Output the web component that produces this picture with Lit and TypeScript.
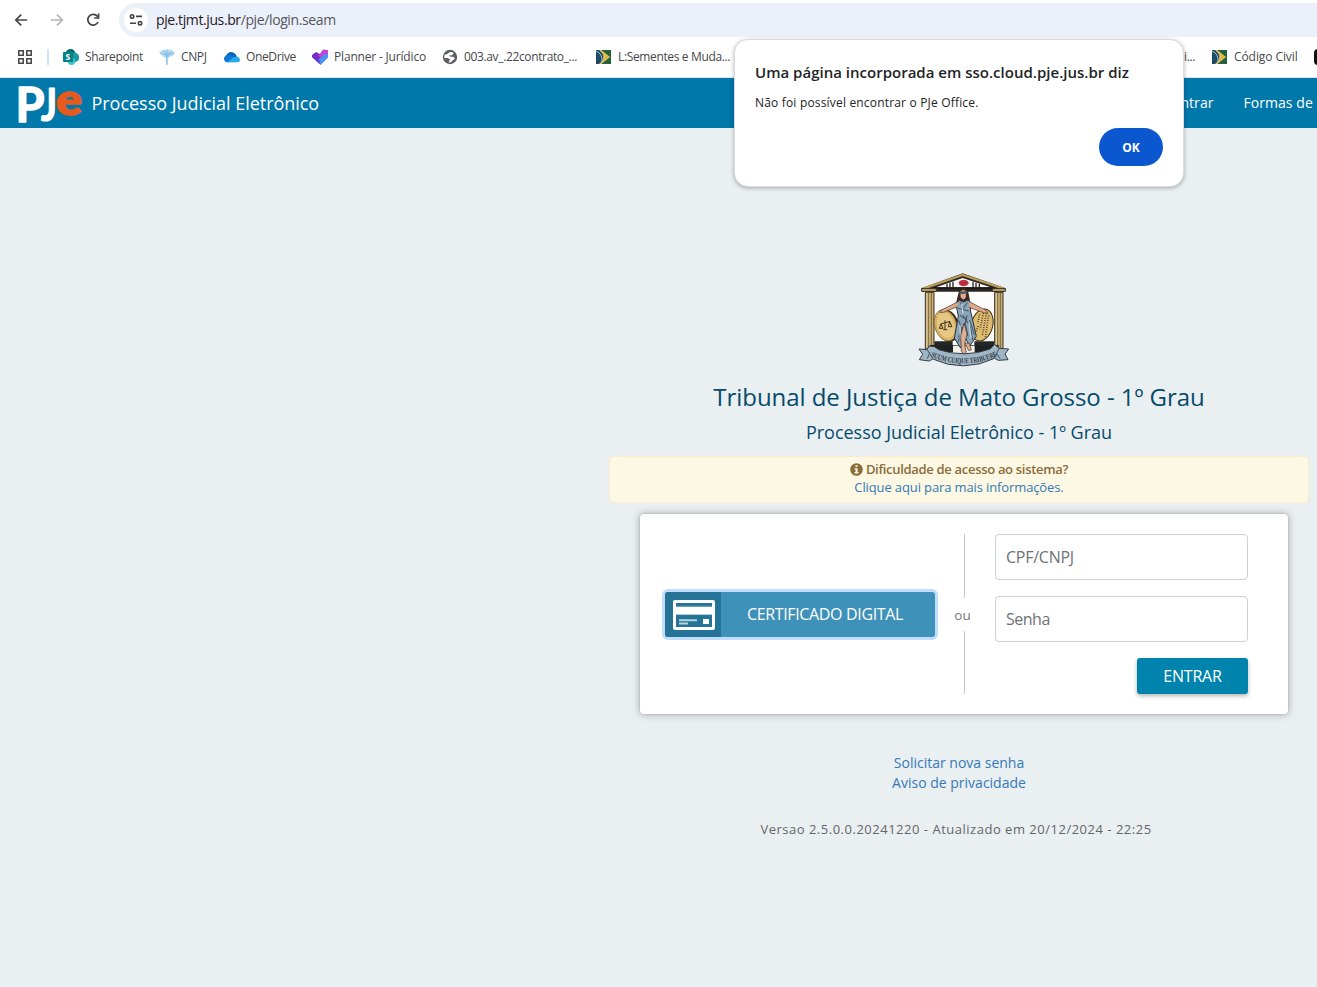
import { LitElement, html, svg, css } from "lit";
import { customElement, property } from "lit/decorators.js";

const flag = svg`
  <rect x="0" y="1" width="15" height="14" fill="#23613c"/>
  <path d="M0 1H5L14 8L5 15H0Z" fill="#f2d58a"/>
  <path d="M5 1L13.5 8L5 15L9 8Z" fill="#e2b53b"/>
  <path d="M0 1H3Q12 8 3 15H0Z" fill="#1c4a63"/>
  <path d="M0 2Q7 5 6 13" fill="none" stroke="#a9c5cf" stroke-width="1"/>`;

const icons: Record<string, unknown> = {
  sharepoint: svg`
    <circle cx="7.5" cy="5" r="5" fill="#036c70"/>
    <circle cx="11.5" cy="8.5" r="4.7" fill="#1a9ba1"/>
    <circle cx="8.5" cy="12.3" r="3.6" fill="#37c6d0"/>
    <rect x="0" y="3" width="10" height="10" rx="1" fill="#038387"/>
    <text x="2.4" y="11" font-family="Open Sans, sans-serif" font-weight="700" font-size="8.5" letter-spacing="0" fill="#fff">S</text>`,
  cnpj: svg`
    <path d="M0 3L4 1L8 0L13 1L16 4L14 7L10 8L9 11L9 16L7 16L7 9L3 7Z" fill="#b9dcf1"/>
    <path d="M1 4L7 6L8 15M4 1L8 8L13 2M8 1L7 6L15 4" fill="none" stroke="#7fb6de" stroke-width=".8"/>
    <path d="M6 4L10 3L11 6L8 9Z" fill="#8dc4e9"/>`,
  onedrive: svg`
    <path d="M3 13A4 4 0 0 1 2 6.6Q5 1.6 9.4 3.6Q12 5 13 8L9 13Z" fill="#0364b8"/>
    <path d="M3 13.3A3.4 3.4 0 0 1 2 6.8Q5 5 8 7L13 10V13Z" fill="#0f78d4"/>
    <path d="M3 13.3L10 8Q13 6.5 15.3 8.8Q17 12.6 14 13.3Z" fill="#28a8ea"/>`,
  planner: svg`
    <path d="M0 6L4 3L8 5L11 .8L16 1V8L8.5 15.8L0 8Z" fill="#7a2fc4"/>
    <path d="M5 5L8 6L11 .8L16 1V5L9 9Z" fill="#c644d8"/>
    <path d="M6 11L12 5.5L16 5V8.5L8.8 15.8L6 13Z" fill="#4a93f2"/>
    <path d="M0 6L4 8L8 12L7 14.4L0 8Z" fill="#6a35cf"/>`,
  globe: svg`
    <circle cx="8" cy="8" r="7.2" fill="#5b5e62"/>
    <path d="M2.6 5.6Q5 5.5 6.5 4L9 2.8L11.8 4L10.2 6.2L7 6.6L8 7.6L12 8L12.8 10L10.5 11.4L9 13.2L6.6 13.6L7.6 11L8.6 10.4L5.5 9L2.2 9Z" fill="#fff"/>`,
  flag,
  black: svg`<rect x="0" y="0" width="16" height="16" rx="4" fill="#111"/>`,
};

@customElement("bookmark-item")
class BookmarkItem extends LitElement {
  @property() icon = "";
  @property() label = "";
  static styles = css`
    :host { display: flex; align-items: center; gap: 6px; flex: none; height: 16px;
      font: 12px/16px "Open Sans", "Noto Sans", sans-serif; letter-spacing: -0.36px; color: #45474a; white-space: nowrap; }
    svg { width: 16px; height: 16px; flex: none; }
  `;
  render() {
    return html`${this.icon ? html`<svg viewBox="0 0 16 16">${icons[this.icon]}</svg>` : ""}<span>${this.label}</span>`;
  }
}

@customElement("court-emblem")
class CourtEmblem extends LitElement {
  static styles = css`:host { display: block; } svg { display: block; width: 110px; height: 110px; }`;
  render() {
    return html`<svg viewBox="0 0 330 330">
      <path d="M66 76H256V240H66Z" fill="#fbfcfb"/>
      <path d="M34 70L158 25L287 70L285 80H36Z" fill="#282522"/>
      <path d="M42 70L158 30L279 70" fill="none" stroke="#b99c5c" stroke-width="7"/>
      <path d="M78 67L158 39L242 67Z" fill="#fafafa"/>
      <g stroke="#282522" stroke-width="4"><path d="M111 56V67M120 53V67M129 50V67M189 50V67M198 53V67M208 56V67"/></g>
      <ellipse cx="161" cy="54" rx="15" ry="10" fill="#c93847"/>
      <path d="M151 52H171M151 57H171" stroke="#8b1e30" stroke-width="2"/>
      <path d="M74 69H248" stroke="#191715" stroke-width="5"/>
      <g fill="#c7b078" stroke="#3a3022" stroke-width="3">
        <path d="M46 82H72V252H46ZM254 82H279V252H254Z"/>
        <path d="M35 71H79V79H35ZM247 71H286V79H247Z"/>
      </g>
      <g stroke="#7d6538" stroke-width="3"><path d="M55 84V250M64 84V250M263 84V250M271 84V250"/></g>
      <g stroke="#eee0b4" stroke-width="2"><path d="M51 84V250M259 84V250"/></g>
      <path d="M73 229H128V242H73ZM193 229H252V242H193Z" fill="#252628"/>
      <path d="M60 240H266V262H60Z" fill="#1e2022"/>
      <path d="M129 242H194V264H129Z" fill="#f2f1ec"/>
      <ellipse cx="111" cy="182" rx="35" ry="50" transform="rotate(-17 110 181)" fill="#2a241b"/>
      <ellipse cx="107" cy="181" rx="33" ry="48" transform="rotate(-17 107 181)" fill="#dcb765" stroke="#756034" stroke-width="2"/>
      <ellipse cx="107" cy="181" rx="27" ry="41" transform="rotate(-17 107 181)" fill="#e7c883" stroke="#c19d55" stroke-width="3" stroke-dasharray="3 3"/>
      <path d="M105 166V193M92 177L120 169M93 177L88 190H99L93 177M119 170L115 185H126L119 170M100 194H112" fill="none" stroke="#3f321e" stroke-width="3"/>
      <ellipse cx="216" cy="180" rx="32" ry="49" transform="rotate(15 216 180)" fill="#dcb765" stroke="#3c301d" stroke-width="3"/>
      <ellipse cx="216" cy="180" rx="26" ry="43" transform="rotate(15 216 180)" fill="#dfbd73"/>
      <path d="M209 148L203 176M220 144L210 193M229 145L217 211M236 151L226 216M204 183L198 200" stroke="#5c4828" stroke-width="5" stroke-dasharray="3 4"/>
      <path d="M145 86Q148 67 160 68Q174 68 176 86L180 107L171 116H148L139 110Z" fill="#3c281f"/>
      <path d="M151 80Q160 70 169 80L167 98L160 104L152 97Z" fill="#dfad8c"/>
      <path d="M149 80L171 78V86L149 87Z" fill="#4a5968"/>
      <path d="M137 114L148 106L160 111L174 105L185 115L181 135L199 214L179 244L167 220L152 249L133 220L145 153Z" fill="#8ba5b8" stroke="#29333d" stroke-width="3"/>
      <path d="M145 110L94 135L89 142L100 142L143 125M178 110L228 136L234 145L221 143L177 127" fill="#dda987" stroke="#4c352a" stroke-width="2"/>
      <path d="M150 112L160 130L173 112M145 130L176 138M149 151L170 164L145 217M158 150L181 184L188 225M146 166L156 194L144 232M171 151L166 176L174 214M179 165L193 209" fill="none" stroke="#405363" stroke-width="3"/>
      <path d="M155 117L159 145M177 172L183 220M150 180L151 223" stroke="#c2d2dc" stroke-width="4"/>
      <path d="M162 174L152 214L154 258L160 268L169 262L164 238L171 206Z" fill="#ddb092" stroke="#3e302a" stroke-width="2"/>
      <path d="M165 234L176 257L184 255L178 235Z" fill="#ddb092" stroke="#3e302a" stroke-width="2"/>
      <path d="M27 252L51 254L57 243L73 245L86 254Q165 280 240 252L254 238L267 250L296 252L285 267L294 284L265 286L254 280Q160 324 68 282L58 288L28 284L38 268Z" fill="#9eb7c6" stroke="#343a42" stroke-width="3"/>
      <path d="M52 255L68 280M267 251L254 278M52 281L60 262M260 265L270 281" fill="none" stroke="#43515f" stroke-width="3"/>
      <path id="motto" d="M62 275Q162 316 262 273" fill="none"/>
      <text font-family="Liberation Serif, serif" font-weight="700" font-size="23" fill="#30343d"><textPath href="#motto" textLength="206" lengthAdjust="spacingAndGlyphs">SUUM CUIQUE TRIBUERE</textPath></text>
    </svg>`;
  }
}

@customElement("app-root")
class AppRoot extends LitElement {
  static styles = css`
    :host { display: block; position: relative; width: 1317px; height: 987px; overflow: hidden;
      background: #eaeff2; font-family: "Open Sans", "Noto Sans", sans-serif; }
    * { box-sizing: border-box; }
    .toolbar { height: 40px; background: #fff; display: flex; align-items: center; padding-left: 12px; }
    .nav { width: 18px; height: 18px; margin-right: 18px; flex: none; }
    .omnibox { flex: 1; height: 34px; margin-left: -1px; padding-left: 5px; background: #ebf0fa; border-radius: 17px 0 0 17px; display: flex; align-items: center; gap: 8px; }
    .tune { width: 24px; height: 24px; border-radius: 50%; background: #fff; display: grid; place-items: center; }
    .tune svg { width: 16px; height: 16px; }
    .url { font-size: 14px; line-height: 20px; letter-spacing: -0.39px; color: #55575b; }
    .url b { font-weight: 400; color: #1f2023; }
    .bookmarks { height: 38px; background: #fff; border-bottom: 1px solid #dfe5e9; display: flex; align-items: center; padding: 0 0 3px 18px; overflow: hidden; }
    .apps { width: 14px; height: 14px; flex: none; }
    .sep { width: 2px; height: 16px; background: #d3e1f8; margin: 0 14px 0 15px; flex: none; }
    .w1 { width: 96px; } .w2 { width: 65px; } .w3 { width: 88px; } .w4 { width: 130px; letter-spacing: -0.18px; } .w5 { width: 154px; }
    .w6 { width: 588px; } .w7 { width: 28px; } .w8 { width: 102px; letter-spacing: -0.08px; }
    .header { height: 50px; background: #0078aa; color: #fff; display: flex; align-items: center; padding-left: 18px; white-space: nowrap; overflow: hidden; }
    .logo { width: 66px; height: 50px; flex: none; overflow: visible; }
    .brand { font-size: 18px; line-height: 24px; margin-left: 7.5px; width: 1082.5px; letter-spacing: -0.03px; flex: none; }
    .menu { font-size: 14px; line-height: 20px; margin-right: 30px; letter-spacing: .05px; }
    .menu.entrar { width: 46px; margin-left: -6.5px; display: flex; justify-content: flex-end; flex: none; }
    .main { margin-left: 609px; width: 700px; display: flex; flex-direction: column; align-items: center; }
    .emblem { margin: 137px 0 0 12px; }
    h1 { margin: 4px 0 0; font-size: 24px; line-height: 36px; font-weight: 400; color: #064b6a; white-space: nowrap; letter-spacing: -0.05px; }
    h2 { margin: 4px 0 0; font-size: 18px; line-height: 26px; font-weight: 400; color: #064b6a; white-space: nowrap; letter-spacing: -0.02px; }
    .notice { width: 100%; height: 47px; margin-top: 11px; border: 1px solid #faebcc; border-radius: 4px; background: #fcf8e3; display: flex; flex-direction: column; align-items: center; font-size: 13px; line-height: 18px; padding-top: 3px; color: #8a6d3b; letter-spacing: -0.12px; }
    .notice .strong { display: flex; align-items: center; gap: 3px; font-weight: 600; font-size: 13px; letter-spacing: -0.31px; }
    .notice svg { width: 13px; height: 13px; }
    .link { color: #337ab7; }
    .card { width: 648px; height: 200px; margin: 11px 0 0 10px; background: #fff; border-radius: 4px; box-shadow: 0 0 8px rgba(0,0,0,.3), 0 0 2px rgba(0,0,0,.2); display: flex; padding: 20px 40px 20px 25px; }
    .cert { width: 270px; height: 45px; margin-top: 58px; display: flex; border-radius: 3px; background: #3e92b9; box-shadow: 0 0 0 3px #bfdeff; color: #fff; flex: none; }
    .certicon { width: 56px; background: #257497; display: grid; place-items: center; border-radius: 3px 0 0 3px; padding-left: 1px; }
    .certicon svg { width: 42px; height: 30px; }
    .certlabel { flex: 1; text-align: center; padding-right: 6px; font-size: 16px; line-height: 45px; letter-spacing: -0.35px; white-space: nowrap; }
    .divider { width: 20px; margin-left: 18px; display: flex; flex-direction: column; align-items: center; flex: none; }
    .divider i { width: 1px; background: #c8c8c8; margin-left: 2px; }
    .top { height: 64px; } .bottom { height: 63px; }
    .divider span { height: 33px; line-height: 34px; font-size: 13.5px; color: #777; margin-left: -1px; }
    .form { margin-left: 22px; width: 253px; display: flex; flex-direction: column; }
    .field { height: 46px; margin-bottom: 16px; border: 1px solid #ced0da; border-radius: 4px; padding: 0 10px; font-size: 16px; line-height: 45px; color: #6e7277; letter-spacing: -0.5px; }
    .field.cpf { letter-spacing: -0.25px; }
    .enter { align-self: flex-end; width: 111px; height: 36px; border-radius: 3px; background: #0084ae; color: #fff; text-align: center; font-size: 16px; line-height: 36px; letter-spacing: -0.2px; box-shadow: 0 2px 4px rgba(0,0,0,.3); }
    .links { margin-top: 39px; display: flex; flex-direction: column; align-items: center; font-size: 14px; line-height: 20px; }
    .version { margin: 27px 6px 0 0; font-size: 13px; line-height: 18px; letter-spacing: .51px; color: #666; white-space: nowrap; }
    .dialog { position: absolute; left: 734px; top: 39px; width: 450px; height: 148px; background: #fff; border: 1px solid #dadcdf; border-radius: 14px; box-shadow: 0 1px 4px rgba(0,0,0,.3); padding: 21px 20px; display: flex; flex-direction: column; }
    .dtitle { font-size: 15px; line-height: 22px; font-weight: 600; color: #222326; letter-spacing: 0.01px; white-space: nowrap; }
    .dmsg { font-size: 12px; line-height: 18px; margin-top: 11px; color: #222; letter-spacing: .18px; }
    .ok { align-self: flex-end; width: 64px; height: 38px; margin-top: 16px; border-radius: 19px; background: #0b57d0; color: #fff; text-align: center; font-size: 12px; line-height: 39px; font-weight: 700; }
  `;
  render() {
    return html`
      <div class="toolbar">
        <svg class="nav" viewBox="0 0 18 18"><path d="M15 8H4M9 2.6L3.6 8L9 13.4" transform="translate(.2 1)" fill="none" stroke="#444649" stroke-width="1.7"/></svg>
        <svg class="nav" viewBox="0 0 18 18"><path d="M3 8H14M9 2.6L14.4 8L9 13.4" transform="translate(0 1)" fill="none" stroke="#b3b5b8" stroke-width="1.7"/></svg>
        <svg class="nav" viewBox="0 0 18 18"><path d="M14.1 11A5.4 5.4 0 1 1 13.4 5.3L14.5 6.6M14.6 2.6V7H10.2" fill="none" stroke="#444649" stroke-width="1.7"/></svg>
        <div class="omnibox">
          <div class="tune"><svg viewBox="0 0 16 16" fill="none" stroke="#3c4043" stroke-width="1.6"><circle cx="4.1" cy="4.4" r="1.7"/><path d="M8 4.4H14M2 11.2H8"/><circle cx="12" cy="11.2" r="1.7"/></svg></div>
          <div class="url"><b>pje.tjmt.jus.br</b>/pje/login.seam</div>
        </div>
      </div>
      <div class="bookmarks">
        <svg class="apps" viewBox="0 0 14 14" fill="none" stroke="#47494d" stroke-width="1.6"><path d="M.8.8H5.2V5.2H.8ZM8.8.8H13.2V5.2H8.8ZM.8 8.8H5.2V13.2H.8ZM8.8 8.8H13.2V13.2H8.8Z"/></svg>
        <div class="sep"></div>
        <bookmark-item class="w1" icon="sharepoint" label="Sharepoint"></bookmark-item>
        <bookmark-item class="w2" icon="cnpj" label="CNPJ"></bookmark-item>
        <bookmark-item class="w3" icon="onedrive" label="OneDrive"></bookmark-item>
        <bookmark-item class="w4" icon="planner" label="Planner - Jurídico"></bookmark-item>
        <bookmark-item class="w5" icon="globe" label="003.av_.22contrato_..."></bookmark-item>
        <bookmark-item class="w6" icon="flag" label="L:Sementes e Muda..."></bookmark-item>
        <bookmark-item class="w7" label="i..."></bookmark-item>
        <bookmark-item class="w8" icon="flag" label="Código Civil"></bookmark-item>
        <bookmark-item icon="black"></bookmark-item>
      </div>
      <div class="header">
        <svg class="logo" viewBox="0 0 66 50" font-family="Lato, sans-serif" font-weight="700" stroke-linejoin="round">
          <text x="-2.5" y="44.2" font-size="47" fill="#fff" stroke="#fff" stroke-width="1.4" textLength="29" lengthAdjust="spacingAndGlyphs">P</text>
          <text x="23" y="43.4" font-size="45.5" fill="#fff" stroke="#fff" stroke-width="1.2" textLength="16" lengthAdjust="spacingAndGlyphs">J</text>
          <text x="38" y="37" font-size="43" font-weight="900" fill="#e8591c" stroke="#e8591c" stroke-width="1.6" textLength="26" lengthAdjust="spacingAndGlyphs">e</text>
        </svg>
        <div class="brand">Processo Judicial Eletrônico</div>
        <div class="menu entrar">Entrar</div>
        <div class="menu">Formas de acesso</div>
      </div>
      <div class="main">
        <court-emblem class="emblem"></court-emblem>
        <h1>Tribunal de Justiça de Mato Grosso - 1º Grau</h1>
        <h2>Processo Judicial Eletrônico - 1º Grau</h2>
        <div class="notice">
          <div class="strong"><svg viewBox="0 0 13 13"><circle cx="6.5" cy="6.5" r="6.3" fill="#8a6d3b"/><path d="M5.5 2.2H7.5V4.1H5.5ZM4.5 5.2H7.6V9H8.5V10.4H4.5V9H5.5V6.5H4.5Z" fill="#fcf8e3"/></svg><span>Dificuldade de acesso ao sistema?</span></div>
          <div class="link">Clique aqui para mais informações.</div>
        </div>
        <div class="card">
          <div class="cert">
            <div class="certicon"><svg viewBox="0 0 42 30"><rect x="0" y="0" width="42" height="30" rx="2" fill="#fff"/><rect x="3" y="3" width="36" height="4" fill="#257497"/><path d="M3 6.3H39M3 14.7H39" stroke="#8ab5c8" stroke-width=".8"/><rect x="3" y="15" width="36" height="12" fill="#257497"/><path d="M6 20.3H24M6 23.5H15" stroke="#b8d4df" stroke-width="2"/><rect x="30" y="19" width="6" height="5" fill="#fff"/></svg></div>
            <div class="certlabel">CERTIFICADO DIGITAL</div>
          </div>
          <div class="divider"><i class="top"></i><span>ou</span><i class="bottom"></i></div>
          <div class="form">
            <div class="field cpf">CPF/CNPJ</div>
            <div class="field">Senha</div>
            <div class="enter">ENTRAR</div>
          </div>
        </div>
        <div class="links"><span class="link">Solicitar nova senha</span><span class="link">Aviso de privacidade</span></div>
        <div class="version">Versao 2.5.0.0.20241220 - Atualizado em 20/12/2024 - 22:25</div>
      </div>
      <div class="dialog">
        <div class="dtitle">Uma página incorporada em sso.cloud.pje.jus.br diz</div>
        <div class="dmsg">Não foi possível encontrar o PJe Office.</div>
        <div class="ok">OK</div>
      </div>`;
  }
}
